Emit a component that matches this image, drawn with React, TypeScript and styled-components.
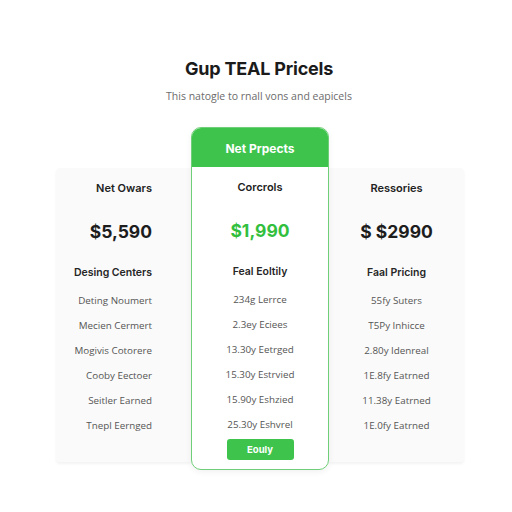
import styled, { createGlobalStyle } from "styled-components"

const GlobalStyle = createGlobalStyle`
  html, body {
    margin: 0;
    padding: 0;
    background: #ffffff;
  }
  body {
    font-family: Inter, "Open Sans", sans-serif;
    color: #1f1f1f;
  }
`

const GREEN = "#3ec44c"

const Page = styled.div`
  width: 512px;
  height: 512px;
  display: flex;
  flex-direction: column;
  align-items: center;
  padding-top: 57px;
  box-sizing: border-box;
`

const Title = styled.h1`
  margin: 0 0 0 6px;
  font-size: 18px;
  line-height: 24px;
  font-weight: 700;
  letter-spacing: -0.2px;
  color: #1b1b1b;
`

const Subtitle = styled.p`
  margin: 8px 0 0 6px;
  font-family: "Open Sans", sans-serif;
  font-size: 10.5px;
  line-height: 14px;
  color: #6b6b6b;
`

const Table = styled.div`
  margin-top: 24px;
  margin-left: 8px;
  display: flex;
  align-items: flex-start;
`

const SideColumn = styled.div<{ $align: "right" | "center" }>`
  width: 135px;
  margin-top: 41px;
  height: 294px;
  box-sizing: border-box;
  background: #fafafa;
  box-shadow: 0 2px 3px rgba(0, 0, 0, 0.05);
  display: flex;
  flex-direction: column;
  text-align: ${(p) => p.$align};
  padding-right: ${(p) => (p.$align === "right" ? "39px" : "0")};
  border-radius: ${(p) => (p.$align === "right" ? "4px 0 0 4px" : "0 4px 4px 0")};
`

const FeaturedCard = styled.div`
  width: 138px;
  height: 343px;
  box-sizing: border-box;
  border: 1.5px solid #6fcf78;
  border-radius: 10px;
  background: #ffffff;
  box-shadow: 0 2px 6px rgba(0, 0, 0, 0.06);
  display: flex;
  flex-direction: column;
  text-align: center;
  overflow: hidden;
  position: relative;
  z-index: 1;
`

const CardHeader = styled.div`
  height: 40px;
  margin: -1.5px -1.5px 0;
  background: ${GREEN};
  color: #ffffff;
  font-size: 12px;
  font-weight: 700;
  display: flex;
  align-items: center;
  justify-content: center;
  padding-top: 4px;
  box-sizing: border-box;
`

const PlanName = styled.div`
  height: 38px;
  line-height: 40px;
  font-size: 11px;
  font-weight: 600;
  color: #222;
`

const Price = styled.div<{ $green?: boolean }>`
  height: 52px;
  line-height: 52px;
  font-size: 17.5px;
  font-weight: 700;
  color: ${(p) => (p.$green ? "#33bf3e" : "#1d1d1d")};
`

const Group = styled.div`
  height: 30px;
  line-height: 30px;
  font-size: 10.5px;
  font-weight: 600;
  color: #262626;
`

const Item = styled.div`
  height: 25px;
  line-height: 25px;
  font-family: "Open Sans", sans-serif;
  font-size: 9.8px;
  color: #555;
`

const ButtonRow = styled.div`
  display: flex;
  justify-content: center;
  padding-top: 2px;
`

const Button = styled.button`
  width: 67px;
  height: 21px;
  border: none;
  border-radius: 3px;
  background: ${GREEN};
  color: #ffffff;
  font-family: Inter, sans-serif;
  font-size: 9.5px;
  font-weight: 700;
  padding: 0;
`

const left = ["Deting Noumert", "Mecien Cermert", "Mogivis Cotorere", "Cooby Eectoer", "Seitler Earned", "Tnepl Eernged"]
const middle = ["234g Lerrce", "2.3ey Eciees", "13.30y Eetrged", "15.30y Estrvied", "15.90y Eshzied", "25.30y Eshvrel"]
const right = ["55fy Suters", "T5Py Inhicce", "2.80y Idenreal", "1E.8fy Eatrned", "11.38y Eatrned", "1E.0fy Eatrned"]

export default function App() {
  return (
    <Page>
      <GlobalStyle />
      <Title>Gup TEAL Pricels</Title>
      <Subtitle>This natogle to rnall vons and eapicels</Subtitle>
      <Table>
        <SideColumn $align="right">
          <PlanName>Net Owars</PlanName>
          <Price>$5,590</Price>
          <Group>Desing Centers</Group>
          {left.map((t) => (
            <Item key={t}>{t}</Item>
          ))}
        </SideColumn>
        <FeaturedCard>
          <CardHeader>Net Prpects</CardHeader>
          <PlanName>Corcrols</PlanName>
          <Price $green>$1,990</Price>
          <Group>Feal Eoltily</Group>
          {middle.map((t) => (
            <Item key={t}>{t}</Item>
          ))}
          <ButtonRow>
            <Button>Eouly</Button>
          </ButtonRow>
        </FeaturedCard>
        <SideColumn $align="center">
          <PlanName>Ressories</PlanName>
          <Price>$ $2990</Price>
          <Group>Faal Pricing</Group>
          {right.map((t) => (
            <Item key={t}>{t}</Item>
          ))}
        </SideColumn>
      </Table>
    </Page>
  )
}
